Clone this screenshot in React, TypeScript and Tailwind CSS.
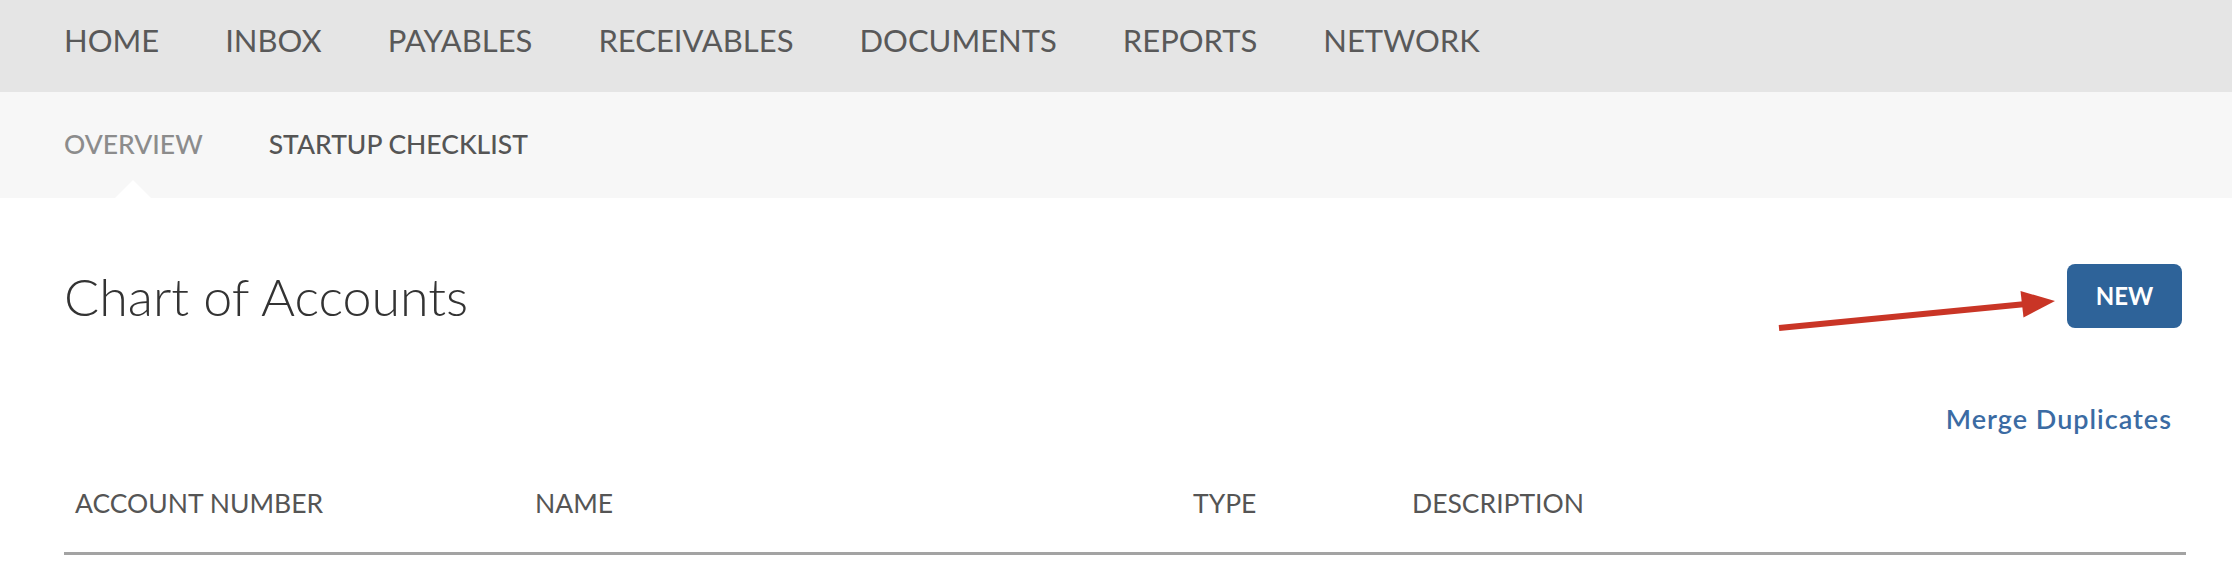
const topNav = ["HOME", "INBOX", "PAYABLES", "RECEIVABLES", "DOCUMENTS", "REPORTS", "NETWORK"];

export default function App() {
  return (
    <div className="relative min-h-[574px] w-full bg-white font-['Lato',sans-serif] text-[#444]">
      {/* Main nav */}
      <nav className="flex h-[92px] items-start gap-[66px] bg-[#e5e5e5] pl-[64px] pt-[22px]">
        {topNav.map((item) => (
          <a key={item} className="text-[31px] leading-[36px] text-[#595959]">
            {item}
          </a>
        ))}
      </nav>

      {/* Sub nav */}
      <div className="flex h-[106px] items-center gap-[66px] bg-[#f7f7f7] pl-[64px]">
        <div className="relative flex h-full items-center">
          <span className="text-[26.5px] font-medium text-[#8c8c8c]">OVERVIEW</span>
          <div className="absolute bottom-0 left-1/2 h-0 w-0 -translate-x-1/2 border-x-[18px] border-b-[18px] border-x-transparent border-b-white" />
        </div>
        <span className="text-[26.5px] font-medium text-[#555]">STARTUP CHECKLIST</span>
      </div>

      {/* Content */}
      <main className="pl-[64px] pr-[46px] pt-[66px]">
        <div className="flex items-center justify-between">
          <h1 className="text-[52px] font-light leading-[60px] text-[#333]">Chart of Accounts</h1>
          <button className="mr-[4px] h-[64px] w-[115px] rounded-[8px] bg-[#2e6399] text-[24px] font-bold text-white">
            NEW
          </button>
        </div>

        <div className="mt-[74px] flex justify-end">
          <a className="mr-[14px] text-[27px] font-semibold leading-[34px] tracking-[1px] text-[#3b6ba3]">Merge Duplicates</a>
        </div>

        <div className="mt-[52px] flex border-b-[3px] border-[#a3a3a3] pb-[34px] text-[26.5px] leading-[30px] text-[#555]">
          <div className="w-[471px] pl-[11px]">ACCOUNT NUMBER</div>
          <div className="w-[658px]">NAME</div>
          <div className="w-[219px]">TYPE</div>
          <div>DESCRIPTION</div>
        </div>
      </main>

      {/* Annotation arrow */}
      <svg className="pointer-events-none absolute left-[1770px] top-[285px]" width="295" height="50" viewBox="0 0 295 50">
        <line x1="9" y1="43" x2="256" y2="19" stroke="#c93526" strokeWidth="6" />
        <polygon points="285,16 253.5,32.5 250.5,6" fill="#c93526" />
      </svg>
    </div>
  );
}
